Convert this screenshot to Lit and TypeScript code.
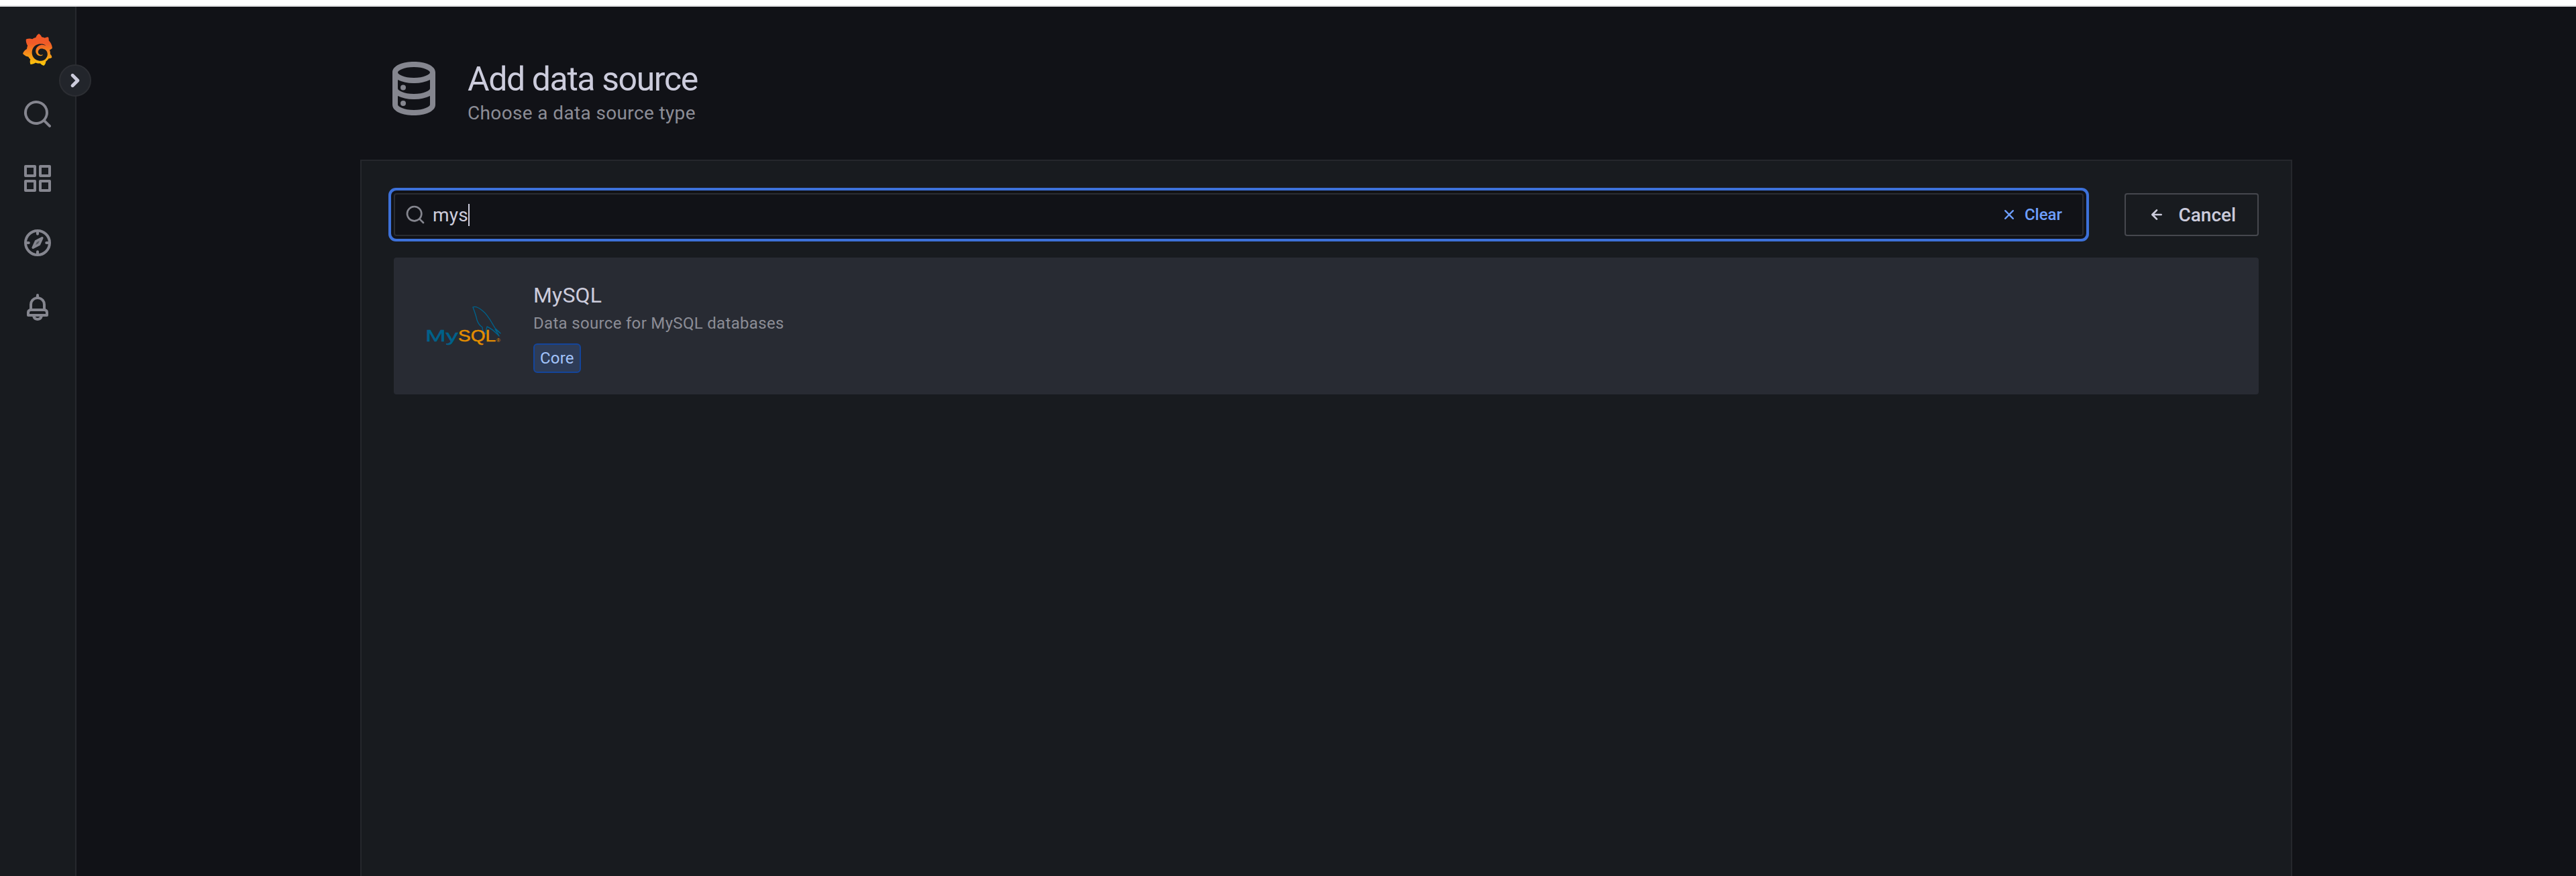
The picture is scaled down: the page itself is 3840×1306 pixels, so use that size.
import { LitElement, html, css, svg } from "lit";
import { customElement } from "lit/decorators.js";

const icon = (size: number, cls: string, body: unknown) => html`<svg class=${cls} width=${size} height=${size} viewBox="0 0 24 24" fill="currentColor">${body}</svg>`;

const P = {
  search: svg`<path d="M21.71,20.29,18,16.61A9,9,0,1,0,16.61,18l3.68,3.68a1,1,0,0,0,1.42,0A1,1,0,0,0,21.71,20.29ZM11,18a7,7,0,1,1,7-7A7,7,0,0,1,11,18Z"/>`,
  apps: svg`<path d="M10,13H3a1,1,0,0,0-1,1v7a1,1,0,0,0,1,1h7a1,1,0,0,0,1-1V14A1,1,0,0,0,10,13ZM9,20H4V15H9ZM21,2H14a1,1,0,0,0-1,1v7a1,1,0,0,0,1,1h7a1,1,0,0,0,1-1V3A1,1,0,0,0,21,2ZM20,9H15V4h5Zm1,4H14a1,1,0,0,0-1,1v7a1,1,0,0,0,1,1h7a1,1,0,0,0,1-1V14A1,1,0,0,0,21,13Zm-1,7H15V15h5ZM10,2H3A1,1,0,0,0,2,3v7a1,1,0,0,0,1,1h7a1,1,0,0,0,1-1V3A1,1,0,0,0,10,2ZM9,9H4V4H9Z"/>`,
  compass: svg`<circle cx="12" cy="12" r="9" fill="none" stroke="currentColor" stroke-width="2"/><path d="M12 4v1.4M12 18.6V20M4 12h1.4M18.6 12H20" stroke="currentColor" stroke-width="2" stroke-linecap="round"/><path d="M15.4 8.4 13.2 13.2 8.6 15.6 10.8 10.8Z" fill="currentColor" fill-opacity="0.55" stroke="currentColor" stroke-width="1.8" stroke-linejoin="round"/>`,
  bell: svg`<path d="M18,13.18V10a6,6,0,0,0-5-5.91V3a1,1,0,0,0-2,0V4.09A6,6,0,0,0,6,10v3.18A3,3,0,0,0,4,16v2a1,1,0,0,0,1,1H8.14a4,4,0,0,0,7.72,0H19a1,1,0,0,0,1-1V16A3,3,0,0,0,18,13.18ZM8,10a4,4,0,0,1,8,0v3H8Zm4,10a2,2,0,0,1-1.72-1h3.44A2,2,0,0,1,12,20Zm6-3H6V16a1,1,0,0,1,1-1H17a1,1,0,0,1,1,1Z"/>`,
  database: svg`<path d="M12,2C8,2,4,3.37,4,6V18c0,2.63,4,4,8,4s8-1.37,8-4V6C20,3.37,16,2,12,2Zm6,16c0,.71-2.28,2-6,2s-6-1.29-6-2V14.73A13.16,13.16,0,0,0,12,16a13.16,13.16,0,0,0,6-1.27Zm0-6c0,.71-2.28,2-6,2s-6-1.29-6-2V8.73A13.16,13.16,0,0,0,12,10a13.16,13.16,0,0,0,6-1.27ZM12,8C8.28,8,6,6.71,6,6s2.28-2,6-2,6,1.29,6,2S15.72,8,12,8Z"/><circle cx="8" cy="11.6" r="1"/><circle cx="8" cy="17.5" r="1"/>`,
  times: svg`<path d="M13.41,12l4.3-4.29a1,1,0,1,0-1.42-1.42L12,10.59,7.71,6.29A1,1,0,0,0,6.29,7.71L10.59,12l-4.3,4.29a1,1,0,0,0,0,1.42,1,1,0,0,0,1.42,0L12,13.41l4.29,4.3a1,1,0,0,0,1.42,0,1,1,0,0,0,0-1.42Z"/>`,
  arrow: svg`<path d="M17,11H9.41l3.3-3.29a1,1,0,1,0-1.42-1.42l-5,5a1,1,0,0,0-.21.33,1,1,0,0,0,0,.76,1,1,0,0,0,.21.33l5,5a1,1,0,0,0,1.42,0,1,1,0,0,0,0-1.42L9.41,13H17a1,1,0,0,0,0-2Z"/>`,
  angle: svg`<path stroke="currentColor" stroke-width="0.7" d="M14.83,11.29,10.59,7.05a1,1,0,0,0-1.42,0,1,1,0,0,0,0,1.41L12.71,12,9.17,15.54a1,1,0,0,0,0,1.41,1,1,0,0,0,.71.29,1,1,0,0,0,.71-.29l4.24-4.24A1,1,0,0,0,14.83,11.29Z"/>`,
};

@customElement("app-root")
export class AppRoot extends LitElement {
  static styles = css`
    :host {
      display: flex;
      flex-direction: column;
      height: 1306px;
      overflow: hidden;
      background: #111217;
      color: #ccccdc;
      font-family: Roboto, "Liberation Sans", sans-serif;
      letter-spacing: 0.01071em;
    }
    .strip { height: 8px; background: #fff; border-bottom: 2px solid #e0e0e2; flex: none; }
    .app { flex: 1; display: flex; min-height: 0; position: relative; }
    .side {
      width: 112px; flex: none; background: #181b1f;
      border-right: 2px solid #26282d;
      display: flex; flex-direction: column; align-items: center;
      padding-top: 16px; color: #85868f; box-sizing: content-box;
    }
    .nav { height: 96px; width: 100%; display: flex; align-items: center; justify-content: center; }
    .toggle {
      position: absolute; left: 88px; top: 86px; width: 48px; height: 48px; box-sizing: border-box;
      border-radius: 50%; background: #22252b; border: 2px solid #2c2e33; color: #ccccdc;
      display: flex; align-items: center; justify-content: center;
    }
    .main { flex: 1; min-width: 0; display: flex; justify-content: center; }
    .page { width: 2880px; display: flex; flex-direction: column; }
    .head { display: flex; align-items: flex-start; gap: 32px; padding: 74px 0 51px 32px; flex: none; }
    .head svg { color: #85868f; flex: none; }
    .titles { display: flex; flex-direction: column; padding-top: 3.5px; }
    h1 { margin: 0; font-size: 50px; letter-spacing: -1.4px; line-height: 60px; font-weight: 400; color: #ccccdc; }
    .sub { font-size: 28px; line-height: 36px; color: #8c8d96; margin-top: 3.5px; letter-spacing: 0.36px; }
    .panel {
      flex: 1; background: #181b1f; border: 2px solid #25272c; border-bottom: 0;
      padding: 48px 48px 0; display: flex; flex-direction: column; gap: 32px;
    }
    .row { display: flex; gap: 61px; align-items: center; }
    .input {
      flex: 1; height: 64px; box-sizing: border-box; background: #111217;
      border: 2px solid #2a2c31; border-radius: 4px;
      box-shadow: 0 0 0 4px #111217, 0 0 0 8px #3d71d9;
      display: flex; align-items: center; padding: 0 16px 0 14px;
    }
    .input .mag { color: #85868f; flex: none; }
    .value { margin-left: 10px; font-size: 28px; color: #ccccdc; display: flex; align-items: center; }
    .caret { width: 2px; height: 33px; background: #ccccdc; display: block; }
    .clear { margin-left: auto; display: flex; align-items: center; gap: 9px; font-size: 24px; font-weight: 500; letter-spacing: 0; color: #6e9fff; padding-right: 14px; }
    .cancel {
      width: 200px; height: 64px; box-sizing: border-box; border: 2px solid #46484e; border-radius: 4px;
      display: flex; align-items: center; gap: 17px; padding-left: 29.5px; font-size: 28px; font-weight: 500; letter-spacing: 0; color: #ccccdc; flex: none;
    }
    .card {
      height: 204px; flex: none; background: #282b33; border-radius: 4px;
      display: flex; align-items: center; gap: 48px; padding: 0 48px;
    }
    .mysql { flex: none; }
    .mysql text { font-family: "Liberation Sans", sans-serif; letter-spacing: 0; stroke-width: 0.5px; }
    .info { display: flex; flex-direction: column; align-items: flex-start; padding-top: 4px; }
    .name { font-size: 32px; line-height: 40px; color: #ccccdc; }
    .desc { font-size: 24px; line-height: 32px; color: #8c8d96; margin-top: 6px; letter-spacing: 0.32px; }
    .badge {
      margin-top: 14px; height: 44px; box-sizing: border-box; padding: 0 8px; display: flex; align-items: center;
      background: #2e3c57; border: 2px solid #14459b; border-radius: 6px; color: #a3c4fb; font-size: 24px;
    }
  `;

  render() {
    return html`
      <div class="strip"></div>
      <div class="app">
        <nav class="side">
          <div class="nav">
            <svg class="logo" width="44" height="48" viewBox="8 0 335 365">
              <defs><linearGradient id="g" gradientUnits="userSpaceOnUse" x1="175.5" y1="110" x2="175.5" y2="361"><stop offset="0" stop-color="#f05a28"/><stop offset="1" stop-color="#fbca0a"/></linearGradient></defs>
              <path fill="url(#g)" d="M342,161.2c-0.6-6.1-1.6-13.1-3.6-20.9c-2-7.7-5-16.2-9.4-25c-4.4-8.8-10.1-17.9-17.5-26.8c-2.9-3.5-6.1-6.9-9.5-10.2c5.1-20.3-6.2-37.9-6.2-37.9c-19.5-1.2-31.9,6.1-36.5,9.4c-0.8-0.3-1.5-0.7-2.3-1c-3.3-1.3-6.7-2.6-10.3-3.7c-3.5-1.1-7.1-2.1-10.8-3c-3.7-0.9-7.4-1.6-11.2-2.2c-0.7-0.1-1.3-0.2-2-0.3c-8.5-27.2-32.9-38.6-32.9-38.6c-27.3,17.3-32.4,41.5-32.4,41.5s-0.1,0.5-0.3,1.4c-1.5,0.4-3,0.9-4.5,1.3c-2.1,0.6-4.2,1.4-6.2,2.2c-2.1,0.8-4.1,1.6-6.2,2.5c-4.1,1.8-8.2,3.8-12.2,6c-3.9,2.2-7.7,4.6-11.4,7.1c-0.5-0.2-1-0.4-1-0.4c-37.8-14.4-71.3,2.9-71.3,2.9c-3.1,40.2,15.1,65.5,18.7,70.1c-0.9,2.5-1.7,5-2.5,7.5c-2.8,9.1-4.9,18.4-6.2,28.1c-0.2,1.4-0.4,2.8-0.5,4.2C18.8,192.7,8.5,228,8.5,228c29.1,33.5,63.1,35.6,63.1,35.6c0,0,0.1-0.1,0.1-0.1c4.3,7.7,9.3,15,14.9,21.9c2.4,2.9,4.8,5.6,7.4,8.3c-10.6,30.4,1.5,55.6,1.5,55.6c32.4,1.2,53.7-14.2,58.2-17.7c3.2,1.1,6.5,2.1,9.8,2.9c10,2.6,20.2,4.1,30.4,4.5c2.5,0.1,5.1,0.2,7.6,0.1l1.2,0l0.8,0l1.6,0l1.6-0.1l0,0.1c15.3,21.8,42.1,24.9,42.1,24.9c19.1-20.1,20.2-40.1,20.2-44.4l0,0c0,0,0-0.1,0-0.3c0-0.4,0-0.6,0-0.6l0,0c0-0.3,0-0.6,0-0.9c4-2.8,7.8-5.8,11.4-9.1c7.6-6.9,14.3-14.8,19.9-23.3c0.5-0.8,1-1.6,1.5-2.4c21.6,1.2,36.9-13.4,36.9-13.4c-3.6-22.5-16.4-33.5-19.1-35.6l0,0c0,0-0.1-0.1-0.3-0.2c-0.2-0.1-0.2-0.2-0.2-0.2c0,0,0,0,0,0c-0.1-0.1-0.3-0.2-0.5-0.3c0.1-1.4,0.2-2.7,0.3-4.1c0.2-2.4,0.2-4.9,0.2-7.3l0-1.8l0-0.9l0-0.5c0-0.6,0-0.4,0-0.6l-0.1-1.5l-0.1-2c0-0.7-0.1-1.3-0.2-1.9c-0.1-0.6-0.1-1.3-0.2-1.9l-0.2-1.9l-0.3-1.9c-0.4-2.5-0.8-4.9-1.4-7.4c-2.3-9.7-6.1-18.9-11-27.2c-5-8.3-11.2-15.6-18.3-21.8c-7-6.2-14.9-11.2-23.1-14.9c-8.3-3.7-16.9-6.1-25.5-7.2c-4.3-0.6-8.6-0.8-12.9-0.7l-1.6,0l-0.4,0c-0.1,0-0.6,0-0.5,0l-0.7,0l-1.6,0.1c-0.6,0-1.2,0.1-1.7,0.1c-2.2,0.2-4.4,0.5-6.5,0.9c-8.6,1.6-16.7,4.7-23.8,9c-7.1,4.3-13.3,9.6-18.3,15.6c-5,6-8.9,12.7-11.6,19.6c-2.7,6.9-4.2,14.1-4.6,21c-0.1,1.7-0.1,3.5-0.1,5.2c0,0.4,0,0.9,0,1.3l0.1,1.4c0.1,0.8,0.1,1.7,0.2,2.5c0.3,3.5,1,6.9,1.9,10.1c1.9,6.5,4.9,12.4,8.6,17.4c3.7,5,8.2,9.1,12.9,12.4c4.7,3.2,9.8,5.5,14.8,7c5,1.5,10,2.1,14.7,2.1c0.6,0,1.2,0,1.7,0c0.3,0,0.6,0,0.9,0c0.3,0,0.6,0,0.9-0.1c0.5,0,1-0.1,1.5-0.1c0.1,0,0.3,0,0.4-0.1l0.5-0.1c0.3,0,0.6-0.1,0.9-0.1c0.6-0.1,1.1-0.2,1.7-0.3c0.6-0.1,1.1-0.2,1.6-0.4c1.1-0.2,2.1-0.6,3.1-0.9c2-0.7,4-1.5,5.7-2.4c1.8-0.9,3.4-2,5-3c0.4-0.3,0.9-0.6,1.3-1c1.6-1.3,1.9-3.7,0.6-5.3c-1.1-1.4-3.1-1.8-4.7-0.9c-0.4,0.2-0.8,0.4-1.2,0.6c-1.4,0.7-2.8,1.3-4.3,1.8c-1.5,0.5-3.1,0.9-4.7,1.2c-0.8,0.1-1.6,0.2-2.5,0.3c-0.4,0-0.8,0.1-1.3,0.1c-0.4,0-0.9,0-1.2,0c-0.4,0-0.8,0-1.2,0c-0.5,0-1,0-1.5-0.1c0,0-0.3,0-0.1,0l-0.5-0.1l-0.5-0.1c-0.2,0-0.5,0-0.7-0.1c-0.4-0.1-0.9-0.2-1.3-0.2c-3.4-0.7-6.6-2.1-9.7-4c-3.1-1.9-5.9-4.5-8.3-7.4c-2.4-2.9-4.3-6.2-5.6-9.8c-1.4-3.6-2-7.4-2.2-11.2l0-0.7c0-0.2,0-0.4,0-0.6c0-0.4,0-0.8,0-1.2l0-0.5l0-0.5c0-0.3,0-0.6,0.1-0.9c0.1-0.6,0.1-1.2,0.2-1.8c0.8-4.8,2.4-9.4,4.7-13.4c2.3-4,5.2-7.5,8.6-10.3c3.4-2.8,7.2-5,11.3-6.5c4.1-1.5,8.4-2.4,12.7-2.5c0.6,0,1.1-0.1,1.6-0.1l1.6,0l1.6,0c0.1,0,0.4,0,0.3,0l0.6,0l1.6,0.1c3.5,0.2,7,0.7,10.3,1.4c6.7,1.5,13.1,4,19,7.3c11.8,6.6,21.9,17,27.2,29.6c2.7,6.3,4.2,13,4.7,20c0.1,1.7,0.2,3.5,0.2,5.2c0,0.4,0,0.9,0,1.3l0,0.5l0,0.6c0,0.5,0,1-0.1,1.5c0,0.6-0.1,1.2-0.1,1.7c-0.1,1.2-0.2,2.3-0.4,3.4c-0.1,1.1-0.3,2.3-0.5,3.4c-0.2,1.1-0.4,2.2-0.7,3.3c-0.5,2.2-1.1,4.4-1.7,6.5c-1.4,4.3-3.1,8.5-5.1,12.4c-4,7.9-9.5,15-16,21.1c-6.5,6.1-14,10.9-22.2,14.3c-8.1,3.4-16.8,5.4-25.7,6c-2.2,0.1-4.4,0.2-6.6,0.2l-1.7,0l-0.9,0c-0.3,0-0.6,0-0.9,0l-1.7-0.1c-0.6,0-1.1-0.1-1.7-0.1c-4.4-0.3-8.9-0.9-13.2-1.8c-4.4-0.9-8.7-2.1-12.9-3.5c-8.4-2.9-16.5-6.8-23.8-11.8c-7.3-5-13.9-11-19.6-17.9c-5.6-6.9-10.3-14.7-13.8-22.9c-3.4-8.3-5.6-17.1-6.5-26.1c-0.2-2.2-0.3-4.5-0.4-6.8l0-1.7l0-0.4l0-0.4l0-0.9l0-0.4c0-0.1,0-0.2,0-0.4l0-0.9l0-0.9c0-0.2,0-0.4,0-0.5l0.1-1.8c0.1-2.2,0.3-4.6,0.5-6.8c0.2-2.3,0.6-4.6,1-6.8c0.4-2.3,0.8-4.6,1.4-6.8c2.1-9,5.5-17.6,9.8-25.3c4.3-7.7,9.5-14.6,15.5-20.6c1.5-1.5,3-2.9,4.6-4.3c1.6-1.4,3.2-2.7,4.9-3.9c1.6-1.2,3.3-2.4,5.1-3.5c0.9-0.6,1.7-1.1,2.6-1.7c0.4-0.3,0.9-0.5,1.3-0.8l0.7-0.4l0.7-0.4c1.8-1,3.6-2,5.4-2.8c3.7-1.8,7.5-3.3,11.3-4.6c3.9-1.3,7.9-2.4,11.9-3.2c4-0.9,8.1-1.5,12.1-1.8c2-0.2,4.1-0.3,6.1-0.4c0.5,0,1,0,1.6-0.1l0.8,0l0.6,0l0.7,0l0.8,0c2.3-0.1,4.6,0,6.9,0.1c4.1,0.2,8.1,0.6,12,1.3c8,1.5,15.7,4,22.7,7.4c7,3.4,13.3,7.5,18.7,12.1c0.3,0.3,0.7,0.6,1,0.9c0.3,0.3,0.7,0.6,1,0.9c0.7,0.6,1.3,1.2,2,1.8c0.7,0.6,1.3,1.2,1.9,1.8c0.6,0.6,1.2,1.2,1.8,1.9c2.4,2.5,4.6,5,6.6,7.5c4,5,7.2,10.1,9.8,14.9c0.2,0.3,0.3,0.6,0.5,0.9c0.2,0.3,0.3,0.6,0.4,0.9c0.3,0.6,0.6,1.2,0.9,1.8c0.3,0.6,0.6,1.2,0.8,1.7c0.3,0.6,0.5,1.1,0.7,1.7c1,2.3,1.7,4.3,2.4,6.2c1.1,3.1,1.8,5.8,2.4,8.2c0.2,1,1.1,1.6,2.1,1.5c1-0.1,1.7-0.9,1.7-1.9C342.6,170.4,342.5,166.1,342,161.2z"/>
            </svg>
          </div>
          <div class="nav">${icon(48, "", P.search)}</div>
          <div class="nav">${icon(48, "", P.apps)}</div>
          <div class="nav">${icon(48, "", P.compass)}</div>
          <div class="nav">${icon(48, "", P.bell)}</div>
        </nav>
        <div class="toggle">${icon(48, "", P.angle)}</div>
        <main class="main">
          <div class="page">
            <header class="head">
              ${icon(96, "", P.database)}
              <div class="titles">
                <h1>Add data source</h1>
                <div class="sub">Choose a data source type</div>
              </div>
            </header>
            <section class="panel">
              <div class="row">
                <div class="input">
                  ${icon(32, "mag", P.search)}
                  <span class="value">mys<i class="caret"></i></span>
                  <span class="clear">${icon(28, "", P.times)}Clear</span>
                </div>
                <div class="cancel">${icon(32, "", P.arrow)}Cancel</div>
              </div>
              <div class="card">
                <svg class="mysql" width="112" height="112" viewBox="0 0 112 112">
                  <g fill="none" stroke="#00618a" stroke-width="1.4" stroke-linejoin="round" stroke-linecap="round">
                    <path d="M70 28C74 26 79 29 84 33 92 39 97 49 101 56 103 61 107 62 111 67L103 61C106 66 108 68 109 71 104 66 99 60 91 57 89 62 90 67 89 68 85 65 84 60 84 58 81 56 78 53 76 47 75 42 73 36 70 28Z"/>
                  </g>
                  <text x="-1" y="79" font-size="23" fill="#00618a" stroke="#00618a" textLength="49" lengthAdjust="spacingAndGlyphs">My</text>
                  <text x="48" y="79" font-size="23" fill="#e48e00" stroke="#e48e00" textLength="56" lengthAdjust="spacingAndGlyphs">SQL</text>
                  <text x="105" y="80" font-size="8" fill="#e48e00">®</text>
                </svg>
                <div class="info">
                  <div class="name">MySQL</div>
                  <div class="desc">Data source for MySQL databases</div>
                  <div class="badge">Core</div>
                </div>
              </div>
            </section>
          </div>
        </main>
      </div>
    `;
  }
}
